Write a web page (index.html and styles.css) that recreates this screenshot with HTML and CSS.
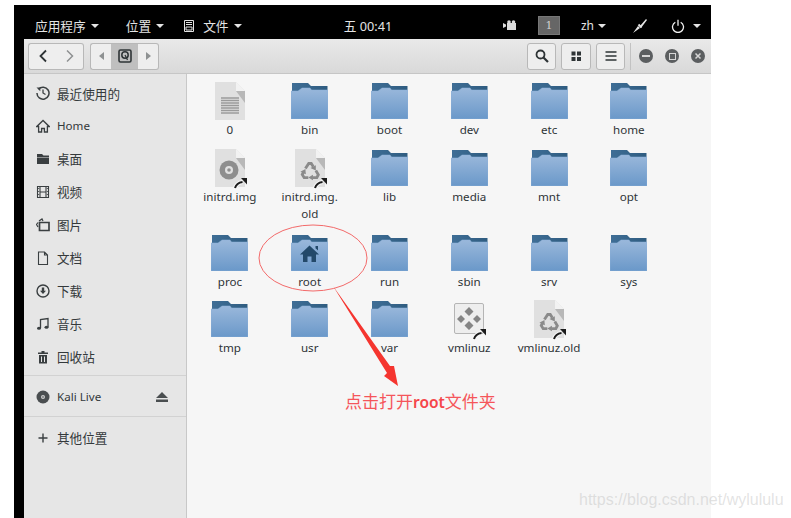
FILE: index.html
```html
<!DOCTYPE html>
<html lang="zh">
<head>
<meta charset="utf-8">
<title>文件</title>
<link rel="stylesheet" href="styles.css">
</head>
<body>
<svg class="defs" width="0" height="0" aria-hidden="true">
  <defs>
    <linearGradient id="folderFill" x1="0" y1="0" x2="0" y2="1">
      <stop offset="0" stop-color="#9ab8db"/>
      <stop offset="1" stop-color="#6a98c9"/>
    </linearGradient>
    <linearGradient id="folderBack" x1="0" y1="0" x2="1" y2="0">
      <stop offset="0" stop-color="#3f6e96"/>
      <stop offset="1" stop-color="#2f5c80"/>
    </linearGradient>
    <symbol id="folder" viewBox="0 0 37 36" preserveAspectRatio="none">
      <path d="M1 0h16l3 3h16.500v6H1z" fill="url(#folderBack)"/>
      <path d="M0 36V8h7l4-3h8l1.500 2H37v29z" fill="url(#folderFill)" stroke="#8fb3d8" stroke-width=".5"/>
    </symbol>
    <symbol id="page" viewBox="0 0 32 40">
      <path d="M1 1h21l9 9v29H1z" fill="#e0e0e0"/>
      <path d="M22 1l9 9h-9z" fill="#f2f2f2"/>
      <path d="M22 10h9v12z" fill="#b8b8b8"/>
    </symbol>
    <symbol id="link-arrow" viewBox="0 0 14 10" overflow="visible">
      <path d="M2 10C3 6.500 6 4.500 9.500 4" fill="none" stroke="#f6f6f6" stroke-width="4"/>
      <path d="M2 10C3 6.500 6 4.500 9.500 4" fill="none" stroke="#1c1c1c" stroke-width="2"/>
      <path d="M8 0h6v6.500z" fill="#1c1c1c"/>
    </symbol>
    <symbol id="recycle" viewBox="0 0 24 24">
      <path d="M6.500 9l4-6h3l2.500 4" fill="none" stroke="#8a8a8a" stroke-width="3.400"/>
      <path d="M12.500 8.500L19 5v6.500z" fill="#8a8a8a"/>
      <path d="M19 11.500l3 5-1.800 3.500H15" fill="none" stroke="#8a8a8a" stroke-width="3.400"/>
      <path d="M15.500 16.500V23l-5.500-3.300z" fill="#8a8a8a"/>
      <path d="M10 20H5l-2.300-3.800 2-3.700" fill="none" stroke="#8a8a8a" stroke-width="3.400"/>
      <path d="M.5 13l6-3.500.5 6.500z" fill="#8a8a8a"/>
    </symbol>
  </defs>
</svg>

<div class="desktop">
  <header class="panel">
    <div class="panel-side">
      <span class="panel-item">应用程序<i class="caret caret-light"></i></span>
      <span class="panel-item panel-places">位置<i class="caret caret-light"></i></span>
      <span class="panel-item panel-files">
        <svg class="panel-file-icon" viewBox="0 0 12 12"><path d="M1.500.5h9v11h-9zM3 2.500h6M3 4.500h6M3 7h6v3H3z" fill="none" stroke="#e4e4e4"/></svg>
        文件<i class="caret caret-light"></i>
      </span>
    </div>
    <span class="panel-clock">五 00:41</span>
    <div class="panel-side panel-side-end">
      <svg class="panel-camera" viewBox="0 0 14 11"><path d="M0 3l3 1.500v2L0 8z M4 3h9v7H4z" fill="#dcdcdc"/><circle cx="6" cy="2" r="1.800" fill="#dcdcdc"/><circle cx="10.500" cy="2" r="1.800" fill="#dcdcdc"/></svg>
      <span class="workspace">1</span>
      <span class="panel-item panel-lang">zh<i class="caret caret-light"></i></span>
      <svg class="panel-pen" viewBox="0 0 16 16"><path d="M1 15l5-7 2 2zM8 8l6-7 1 1-6 8z" fill="#e6e6e6"/><path d="M6.500 6.500l3 3" stroke="#e6e6e6" stroke-width="2"/></svg>
      <svg class="panel-power" viewBox="0 0 14 14"><path d="M4.300 3.200a5.500 5.500 0 1 0 5.400 0M7 .8v6" fill="none" stroke="#eee" stroke-width="1.300"/></svg>
      <i class="caret caret-light panel-power-caret"></i>
    </div>
  </header>

  <div class="window">
    <div class="toolbar">
      <div class="btn-group nav-group">
        <button class="tool tool-nav"><svg viewBox="0 0 10 14"><path d="M8 1.500L2.500 7 8 12.500" fill="none" stroke="#2e3436" stroke-width="1.800"/></svg></button>
        <button class="tool tool-nav"><svg viewBox="0 0 10 14"><path d="M2 1.500L7.500 7 2 12.500" fill="none" stroke="#8e9192" stroke-width="1.500"/></svg></button>
      </div>
      <div class="btn-group path-group">
        <button class="tool tool-step"><i class="tri tri-left"></i></button>
        <button class="tool tool-crumb">
          <svg viewBox="0 0 14 14"><rect x="1" y="1" width="12" height="12" rx="1.500" fill="none" stroke="#2e3436" stroke-width="1.600"/><circle cx="7" cy="6" r="3.200" fill="none" stroke="#2e3436" stroke-width="1.500"/><path d="M7 6l2.500 5" stroke="#2e3436" stroke-width="1.300"/></svg>
        </button>
        <button class="tool tool-step"><i class="tri tri-right"></i></button>
      </div>
      <div class="toolbar-end">
        <button class="tool tool-square"><svg viewBox="0 0 14 14"><circle cx="5.500" cy="5.500" r="4" fill="none" stroke="#2e3436" stroke-width="1.800"/><path d="M8.500 8.500l4.500 4.500" stroke="#2e3436" stroke-width="2.200"/></svg></button>
        <button class="tool tool-square tool-square-wide"><svg viewBox="0 0 14 14"><path d="M2.500 2.500h4v4h-4zM8 2.500h4v4H8zM2.500 8h4v4h-4zM8 8h4v4H8z" fill="#2e3436"/></svg></button>
        <button class="tool tool-square"><svg viewBox="0 0 14 14"><path d="M1.500 3h11M1.500 7h11M1.500 11h11" stroke="#2e3436" stroke-width="1.700"/></svg></button>
        <span class="toolbar-sep"></span>
        <span class="win-ctl"><i class="glyph-min"></i></span>
        <span class="win-ctl"><i class="glyph-max"></i></span>
        <span class="win-ctl"><svg viewBox="0 0 8 8"><path d="M1.500 1.500l5 5M6.500 1.500l-5 5" stroke="#d6d6d6" stroke-width="1.500"/></svg></span>
      </div>
    </div>

    <div class="body">
      <nav class="sidebar">
        <ul class="places">
          <li class="place"><svg class="place-icon" viewBox="0 0 14 14"><path d="M2.500 3.200A6 6 0 1 1 1 7" fill="none" stroke="#3a3f41" stroke-width="1.500"/><path d="M.5 1.500h3.800v3.800z" fill="#3a3f41"/><path d="M7 3.500V7l2.500 1.500" fill="none" stroke="#3a3f41" stroke-width="1.300"/></svg>最近使用的</li>
          <li class="place place-latin"><svg class="place-icon" viewBox="0 0 14 14"><path d="M7 1.500L.8 7.500h1.800V13h3V9.500h2.800V13h3V7.500h1.800z" fill="none" stroke="#3a3f41" stroke-width="1.300"/></svg>Home</li>
          <li class="place"><svg class="place-icon" viewBox="0 0 14 14"><path d="M1 2h5l1.500 1.500H13V5H1zM1 5.500h12V12H1z" fill="#3a3f41"/></svg>桌面</li>
          <li class="place"><svg class="place-icon" viewBox="0 0 14 14"><path d="M1.500 1.500h11v11h-11zM4 1.500v11M10 1.500v11M4 7h6" fill="none" stroke="#3a3f41" stroke-width="1.100"/><path d="M2.700 3v1M2.700 6v1M2.700 9v1M11.300 3v1M11.300 6v1M11.300 9v1" stroke="#3a3f41"/></svg>视频</li>
          <li class="place"><svg class="place-icon" viewBox="0 0 14 14"><path d="M3.500 4.500h9.500v8H3.500z" fill="none" stroke="#3a3f41" stroke-width="1.700"/><path d="M3 3l3-2 1 2M2 4.500L.5 6.500 2 9" fill="none" stroke="#3a3f41" stroke-width="1.200"/></svg>图片</li>
          <li class="place"><svg class="place-icon" viewBox="0 0 14 14"><path d="M2.500 1h6l3 3v9.500h-9zM8.500 1v3h3" fill="none" stroke="#3a3f41" stroke-width="1.100"/></svg>文档</li>
          <li class="place"><svg class="place-icon" viewBox="0 0 14 14"><circle cx="7" cy="7" r="6" fill="none" stroke="#3a3f41" stroke-width="1.400"/><path d="M5.800 3.500h2.400v3.200h1.800L7 10 4 6.700h1.800z" fill="#3a3f41"/></svg>下载</li>
          <li class="place"><svg class="place-icon" viewBox="0 0 14 14"><path d="M4.500 11V2.500l7.500-1V10" fill="none" stroke="#3a3f41" stroke-width="1.300"/><ellipse cx="3" cy="11.300" rx="2" ry="1.500" fill="#3a3f41"/><ellipse cx="10.500" cy="10.300" rx="2" ry="1.500" fill="#3a3f41"/></svg>音乐</li>
          <li class="place"><svg class="place-icon" viewBox="0 0 14 14"><path d="M2 2.500h3.500V1h3v1.500H12V4H2zM3 5h8v8.500H3z" fill="#3a3f41"/><path d="M5.500 6.500v5.500M8.500 6.500v5.500" stroke="#e6e6e6"/></svg>回收站</li>
        </ul>
        <ul class="places places-section">
          <li class="place place-latin"><svg class="place-icon" viewBox="0 0 14 14"><circle cx="7" cy="7" r="6.500" fill="#4a4e50"/><circle cx="7" cy="7" r="2" fill="#cfcfcf"/><circle cx="7" cy="7" r=".8" fill="#4a4e50"/></svg>Kali Live<svg class="eject" viewBox="0 0 12 10"><path d="M6 0l6 6H0zM0 7.500h12V10H0z" fill="#4a4e50"/></svg></li>
        </ul>
        <ul class="places places-section">
          <li class="place"><svg class="place-icon" viewBox="0 0 14 14"><path d="M7 2.500v9M2.500 7h9" stroke="#3a3f41" stroke-width="1.400"/></svg>其他位置</li>
        </ul>
      </nav>

      <main class="files">
        <div class="file"><svg class="file-page" viewBox="0 0 32 40"><use href="#page"/><path d="M7 17h18M7 19.500h18M7 22h18M7 24.500h18M7 27h18M7 29.500h18M7 32h18" stroke="#9a9a9a" stroke-width="1.400"/></svg><span>0</span></div>
        <div class="file"><svg class="file-folder"><use href="#folder"/></svg><span>bin</span></div>
        <div class="file"><svg class="file-folder"><use href="#folder"/></svg><span>boot</span></div>
        <div class="file"><svg class="file-folder"><use href="#folder"/></svg><span>dev</span></div>
        <div class="file"><svg class="file-folder"><use href="#folder"/></svg><span>etc</span></div>
        <div class="file"><svg class="file-folder"><use href="#folder"/></svg><span>home</span></div>

        <div class="file"><svg class="file-page" viewBox="0 0 32 40"><use href="#page"/><circle cx="15" cy="22" r="9.500" fill="#8e8e8e"/><circle cx="15" cy="22" r="4" fill="#e0e0e0"/><circle cx="15" cy="22" r="1.800" fill="#8e8e8e"/><use href="#link-arrow" x="19" y="30" width="14" height="10"/></svg><span>initrd.img</span></div>
        <div class="file"><svg class="file-page" viewBox="0 0 32 40"><use href="#page"/><use href="#recycle" x="6" y="13" width="20" height="20"/><use href="#link-arrow" x="19" y="30" width="14" height="10"/></svg><span>initrd.img.<br>old</span></div>
        <div class="file"><svg class="file-folder"><use href="#folder"/></svg><span>lib</span></div>
        <div class="file"><svg class="file-folder"><use href="#folder"/></svg><span>media</span></div>
        <div class="file"><svg class="file-folder"><use href="#folder"/></svg><span>mnt</span></div>
        <div class="file"><svg class="file-folder"><use href="#folder"/></svg><span>opt</span></div>

        <div class="file"><svg class="file-folder"><use href="#folder"/></svg><span>proc</span></div>
        <div class="file"><svg class="file-folder"><use href="#folder"/><path d="M18.500 10.500L9 19.500H12V27h4.500v-5.500h4V27H25v-7.500h3zM24.500 11H27v4.500l-2.500-2.200z" fill="#23496a"/></svg><span>root</span></div>
        <div class="file"><svg class="file-folder"><use href="#folder"/></svg><span>run</span></div>
        <div class="file"><svg class="file-folder"><use href="#folder"/></svg><span>sbin</span></div>
        <div class="file"><svg class="file-folder"><use href="#folder"/></svg><span>srv</span></div>
        <div class="file"><svg class="file-folder"><use href="#folder"/></svg><span>sys</span></div>

        <div class="file"><svg class="file-folder"><use href="#folder"/></svg><span>tmp</span></div>
        <div class="file"><svg class="file-folder"><use href="#folder"/></svg><span>usr</span></div>
        <div class="file"><svg class="file-folder"><use href="#folder"/></svg><span>var</span></div>
        <div class="file"><svg class="file-page" viewBox="0 0 32 40"><rect x="1.500" y="4.500" width="29" height="30" rx="1.500" fill="#eeeeee" stroke="#b5b5b5"/><path d="M16 8l4.500 4.500L16 17l-4.500-4.500zM8 16l4 4-4 4-4-4zM24 16l4 4-4 4-4-4zM16 22l4.500 4.500L16 31l-4.500-4.500z" fill="#858585"/><use href="#link-arrow" x="19" y="30" width="14" height="10"/></svg><span>vmlinuz</span></div>
        <div class="file"><svg class="file-page" viewBox="0 0 32 40"><use href="#page"/><use href="#recycle" x="6" y="13" width="20" height="20"/><use href="#link-arrow" x="19" y="30" width="14" height="10"/></svg><span>vmlinuz.old</span></div>
      </main>
    </div>
  </div>
</div>

<!-- Hand-drawn callout around the root folder -->
<svg class="callout" viewBox="0 0 791 518">
  <ellipse cx="313" cy="258" rx="54" ry="33" fill="none" stroke="#f36a6a"/>
  <path d="M333 286L390 366 394 366 398 386 384 376 387 373z" fill="#f5352f"/>
</svg>
<p class="callout-text">点击打开<b>root</b>文件夹</p>
<p class="watermark">https://blog.csdn.net/wylululu</p>
</body>
</html>
```

FILE: styles.css
```css
* { box-sizing: border-box; }

html, body {
  margin: 0;
  padding: 0;
  height: 100%;
  overflow: hidden;
  background: #fff;
}

body {
  position: relative;
  font-family: "Noto Sans", "Noto Sans CJK SC", sans-serif;
  font-size: 12px;
  color: #2e3436;
}

.defs { position: absolute; }

.desktop {
  display: flex;
  flex-direction: column;
  width: 697px;
  height: 513px;
  margin: 5px 0 0 14px;
  background: #000;
}

/* Top panel */
.panel {
  display: flex;
  align-items: center;
  height: 34px;
  padding: 7px 16px 0 21px;
  font-size: 12.7px;
  color: #e4e4e4;
  flex: none;
}

.panel-side {
  flex: 1;
  display: flex;
  align-items: center;
}

.panel-side-end { justify-content: flex-end; margin-right: -6px; }
.panel-item { display: inline-flex; align-items: center; white-space: nowrap; }
.panel-places { margin-left: 27px; }
.panel-files { margin-left: 19px; }
.panel-file-icon { width: 12px; height: 12px; margin-right: 8px; }
.panel-clock { white-space: nowrap; }
.panel-camera { width: 14px; height: 11px; }
.panel-lang { margin-left: 21px; font-size: 12px; }
.panel-lang .caret { margin-left: 4px; }
.panel-pen { width: 16px; height: 16px; margin-left: 26px; }
.panel-power { width: 14px; height: 14px; margin-left: 23px; }
.panel .panel-power-caret { margin-left: 8px; }

.workspace {
  width: 22px;
  height: 19px;
  margin-left: 21px;
  background: #666;
  border: 1px solid #777;
  text-align: center;
  line-height: 17px;
  color: #cfcfcf;
  font-family: "DejaVu Serif", serif;
  font-size: 11px;
}

.caret {
  display: inline-block;
  width: 0;
  height: 0;
  margin-left: 5px;
  border: 4px solid transparent;
  border-bottom-width: 0;
  border-top: 4px solid #333;
}

.caret-light { border-top-color: #e4e4e4; }

/* Window chrome */
.window {
  flex: 1;
  min-height: 0;
  margin-left: 10px;
  display: flex;
  flex-direction: column;
  background: #f6f6f6;
}

.toolbar {
  flex: none;
  display: flex;
  align-items: center;
  height: 35px;
  padding: 0 6px 0 4px;
  background: linear-gradient(#e9e9e9, #d9d9d9);
  border-bottom: 1px solid #c6c6c6;
}

.btn-group { display: flex; }
.path-group { margin-left: 6px; }

.tool {
  display: flex;
  align-items: center;
  justify-content: center;
  height: 27px;
  padding: 0;
  background: #eeeeee;
  border: 1px solid #b8b8b8;
  border-radius: 3px;
}

.tool svg { width: 14px; height: 14px; }
.tool-nav { width: 28px; }
.tool-nav:first-child { border-right: 0; border-radius: 3px 0 0 3px; }
.tool-nav:last-child { border-left: 0; border-radius: 0 3px 3px 0; }
.tool-step { width: 21px; }
.tool-step:first-child { border-right: 0; border-radius: 3px 0 0 3px; }
.tool-step:last-child { border-left: 0; border-radius: 0 3px 3px 0; }
.tool-crumb { width: 27px; background: #bfbfbf; border-radius: 0; border-width: 1px 0; }
.tool-square { width: 29px; }
.tool-square-wide { width: 30px; }

.tri { width: 0; height: 0; border: 4px solid transparent; }
.tri-left { border-left: 0; border-right: 5px solid #8e9192; }
.tri-right { border-right: 0; border-left: 5px solid #8e9192; }

.toolbar-end {
  margin-left: auto;
  display: flex;
  align-items: center;
  gap: 5px;
}

.toolbar-sep { width: 1px; height: 27px; background: #c2c2c2; }

.win-ctl {
  display: flex;
  align-items: center;
  justify-content: center;
  width: 14px;
  height: 14px;
  margin-left: 7px;
  border-radius: 50%;
  background: #5b5e60;
}

.toolbar-sep + .win-ctl { margin-left: 3px; }
.win-ctl svg { width: 8px; height: 8px; }
.glyph-min { width: 8px; height: 2px; background: #d6d6d6; }
.glyph-max { width: 7px; height: 7px; border: 1px solid #d6d6d6; }

/* Places sidebar and icon view */
.body { flex: 1; min-height: 0; display: flex; }

.sidebar {
  flex: none;
  width: 163px;
  padding-top: 3px;
  background: #e6e6e6;
  border-right: 1px solid #c8c8c8;
}

.places { list-style: none; margin: 0; padding: 0; }
.places-section { border-top: 1px solid #d2d2d2; padding: 4px 0 3px; }
.places-section:nth-of-type(2) { margin-top: 2px; }

.place {
  display: flex;
  align-items: center;
  height: 33px;
  padding-left: 12px;
  font-size: 12.6px;
  color: #34393b;
}

.places:first-child .place:first-child { height: 32px; }
.place-latin { font-size: 11.6px; }
.place-icon { width: 14px; height: 14px; margin-right: 7px; flex: none; }
.eject { width: 12px; height: 10px; margin-left: auto; margin-right: 18px; }

.files {
  flex: 1;
  display: grid;
  grid-template-columns: repeat(6, 79.8px);
  grid-template-rows: 67px 85px 66px 66px;
  align-content: start;
  padding: 9px 0 0 3px;
}

.file {
  display: flex;
  flex-direction: column;
  align-items: center;
  text-align: center;
  font-size: 11.6px;
  line-height: 17px;
  color: #2e3436;
}

.file-page { width: 32px; height: 40px; margin: -2px 0 0; overflow: visible; }
.file-folder { width: 37px; height: 36px; margin-bottom: 2px; }

/* Annotation layer */
.callout {
  position: absolute;
  left: 0;
  top: 0;
  width: 791px;
  height: 518px;
  pointer-events: none;
}

.callout-text {
  position: absolute;
  left: 345px;
  top: 391px;
  margin: 0;
  font-family: "Liberation Serif", "Noto Sans CJK SC", serif;
  font-size: 17px;
  line-height: 22px;
  color: #f5555a;
}

.callout-text b { font-family: "Noto Sans", sans-serif; font-size: 15.5px; font-weight: 600; color: #f5454a; }

.watermark {
  position: absolute;
  left: 579px;
  top: 489px;
  margin: 0;
  font-family: "Liberation Sans", sans-serif;
  font-size: 16px;
  line-height: 22px;
  color: rgba(180, 180, 180, .38);
}
```
